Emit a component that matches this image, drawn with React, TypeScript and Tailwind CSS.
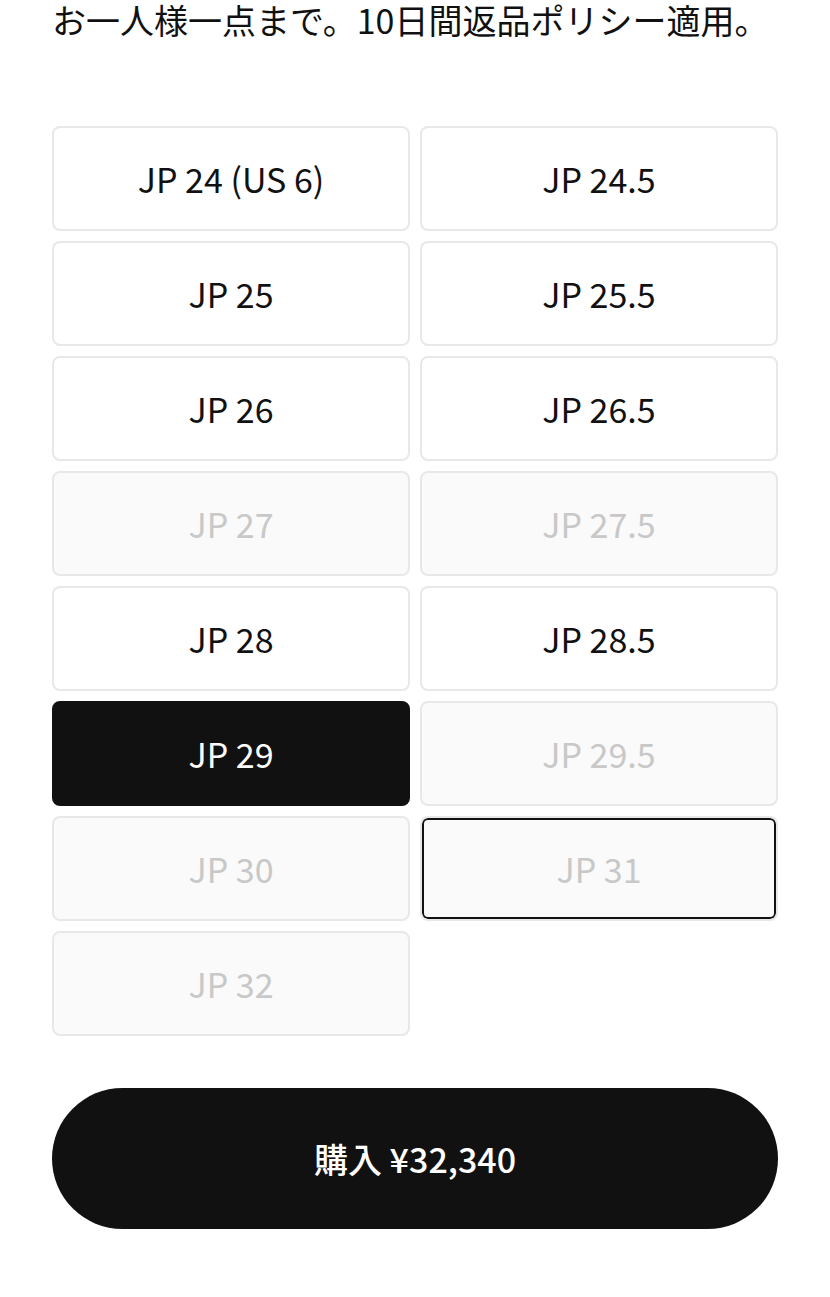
import React from "react";

type Size = { label: string; state: "normal" | "disabled" | "selected" | "focused" };

const sizes: Size[] = [
  { label: "JP 24 (US 6)", state: "normal" },
  { label: "JP 24.5", state: "normal" },
  { label: "JP 25", state: "normal" },
  { label: "JP 25.5", state: "normal" },
  { label: "JP 26", state: "normal" },
  { label: "JP 26.5", state: "normal" },
  { label: "JP 27", state: "disabled" },
  { label: "JP 27.5", state: "disabled" },
  { label: "JP 28", state: "normal" },
  { label: "JP 28.5", state: "normal" },
  { label: "JP 29", state: "selected" },
  { label: "JP 29.5", state: "disabled" },
  { label: "JP 30", state: "disabled" },
  { label: "JP 31", state: "focused" },
  { label: "JP 32", state: "disabled" },
];

function cls(state: Size["state"]) {
  switch (state) {
    case "selected":
      return "bg-[#111111] border-[#111111] text-white";
    case "disabled":
      return "bg-[#fafafa] border-[#e8e8e8] text-[#c8c8c8]";
    case "focused":
      return "bg-[#fafafa] border-[#e8e8e8] text-[#c8c8c8] shadow-[inset_0_0_0_2px_#111111]";
    default:
      return "bg-white border-[#e8e8e8] text-[#111111]";
  }
}

export default function App() {
  return (
    <div
      className="w-[830px] h-[1297px] bg-white px-[52px] overflow-hidden"
      style={{ fontFamily: '"Noto Sans CJK JP", "Noto Sans", sans-serif' }}
    >
      <p className="text-[34px] leading-[40px] text-[#111111] m-0 whitespace-nowrap">
        お一人様一点まで。10日間返品ポリシー適用。
      </p>
      <div className="grid grid-cols-2 gap-[10px] mt-[86px]">
        {sizes.map((s) => (
          <button
            key={s.label}
            className={`h-[105px] rounded-[8px] border-2 flex items-center justify-center text-[34px] leading-none ${cls(
              s.state
            )}`}
          >
            {s.label}
          </button>
        ))}
      </div>
      <button className="mt-[52px] w-full h-[141px] rounded-full bg-[#111111] text-white text-[34px] font-medium flex items-center justify-center">
        購入 ¥32,340
      </button>
    </div>
  );
}
